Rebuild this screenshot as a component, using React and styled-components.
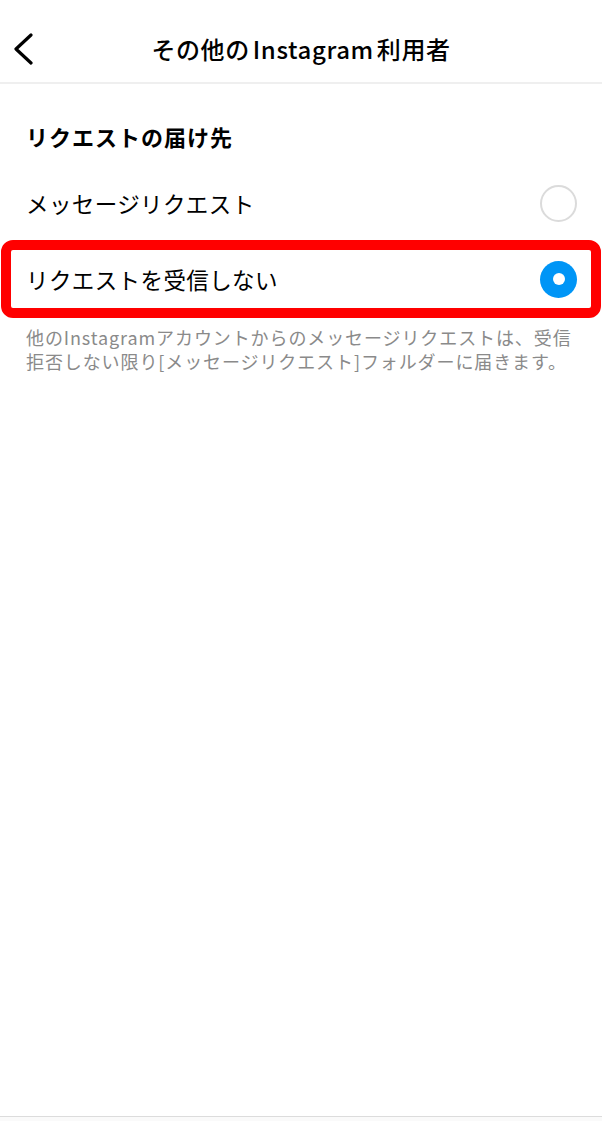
import React, { useState } from "react";
import styled, { createGlobalStyle } from "styled-components";

const Global = createGlobalStyle`
  html, body { margin: 0; padding: 0; background: #ffffff; }
  body {
    font-family: "Noto Sans CJK JP", "Noto Sans", "Liberation Sans", sans-serif;
    color: #000;
    -webkit-font-smoothing: antialiased;
  }
  * { box-sizing: border-box; }
`;

const Screen = styled.div`
  display: flex;
  flex-direction: column;
  min-height: 100vh;
  background: #fefefe;
`;

const Header = styled.header`
  display: grid;
  grid-template-columns: 60px 1fr 60px;
  align-items: center;
  height: 84px;
  padding-top: 18px;
  padding-bottom: 2px;
  background: #fff;
  border-bottom: 2px solid #efefef;
`;

const BackButton = styled.button`
  display: flex;
  align-items: center;
  justify-content: flex-start;
  padding: 0 0 0 12px;
  height: 40px;
  border: 0;
  background: none;
  cursor: pointer;
`;

const Title = styled.h1`
  margin: 0;
  text-align: center;
  font-size: 24px;
  font-weight: 500;
  line-height: 32px;
  letter-spacing: 0.6px;
  word-spacing: 0;
`;

const Brand = styled.span`
  padding: 0 3px;
`;

const Content = styled.main`
  flex: 1;
  background: #fff;
`;

const SectionTitle = styled.h2`
  margin: 0;
  padding: 37px 26px 0;
  font-size: 22px;
  font-weight: 700;
  line-height: 30px;
  letter-spacing: 1px;
`;

const OptionList = styled.div`
  display: flex;
  flex-direction: column;
  margin-top: 14px;
`;

const OptionRow = styled.label`
  position: relative;
  display: flex;
  align-items: center;
  justify-content: space-between;
  height: 76px;
  padding: 0 25px 0 26px;
  cursor: pointer;

  ${(p) =>
    p.$marked &&
    `
    &::after {
      content: "";
      position: absolute;
      left: 1px;
      right: 1px;
      top: -1px;
      bottom: -1px;
      border: 10px solid #ff0000;
      border-radius: 12px;
      pointer-events: none;
    }
  `}
`;

const OptionText = styled.span`
  font-size: 22.5px;
  line-height: 32px;
  font-weight: 400;
  letter-spacing: 0.4px;
`;

const Radio = styled.span`
  display: flex;
  align-items: center;
  justify-content: center;
  width: 37px;
  height: 37px;
  border-radius: 50%;
  border: ${(p) => (p.$checked ? "none" : "2px solid #dbdbdb")};
  background: ${(p) => (p.$checked ? "#0095f6" : "#fff")};

  &::after {
    content: "";
    display: ${(p) => (p.$checked ? "block" : "none")};
    width: 12px;
    height: 12px;
    border-radius: 50%;
    background: #fff;
  }
`;

const Note = styled.p`
  margin: 0;
  padding: 8px 26px 0;
  font-size: 18px;
  line-height: 24px;
  color: #8a8a8a;
  letter-spacing: 0.9px;
`;

const TabBarEdge = styled.footer`
  height: 5px;
  background: #fafafa;
  border-top: 1px solid #dcdcdc;
`;

const options = [
  { id: "requests", label: "メッセージリクエスト" },
  { id: "none", label: "リクエストを受信しない", marked: true },
];

export default function App() {
  const [selected, setSelected] = useState("none");

  return (
    <>
      <Global />
      <Screen>
        <Header>
          <BackButton aria-label="戻る">
            <svg width="22" height="32" viewBox="0 0 22 32" fill="none">
              <path
                d="M19 2 L4 16 L19 30"
                stroke="#000"
                strokeWidth="3.2"
                strokeLinecap="round"
                strokeLinejoin="round"
              />
            </svg>
          </BackButton>
          <Title>
            その他の<Brand>Instagram</Brand>利用者
          </Title>
          <span />
        </Header>
        <Content>
          <SectionTitle>リクエストの届け先</SectionTitle>
          <OptionList>
            {options.map((o) => (
              <OptionRow
                key={o.id}
                $marked={o.marked}
                onClick={() => setSelected(o.id)}
              >
                <OptionText>{o.label}</OptionText>
                <Radio $checked={selected === o.id} />
              </OptionRow>
            ))}
          </OptionList>
          <Note>
            他のInstagramアカウントからのメッセージリクエストは、受信拒否しない限り[メッセージリクエスト]フォルダーに届きます。
          </Note>
        </Content>
        <TabBarEdge />
      </Screen>
    </>
  );
}
